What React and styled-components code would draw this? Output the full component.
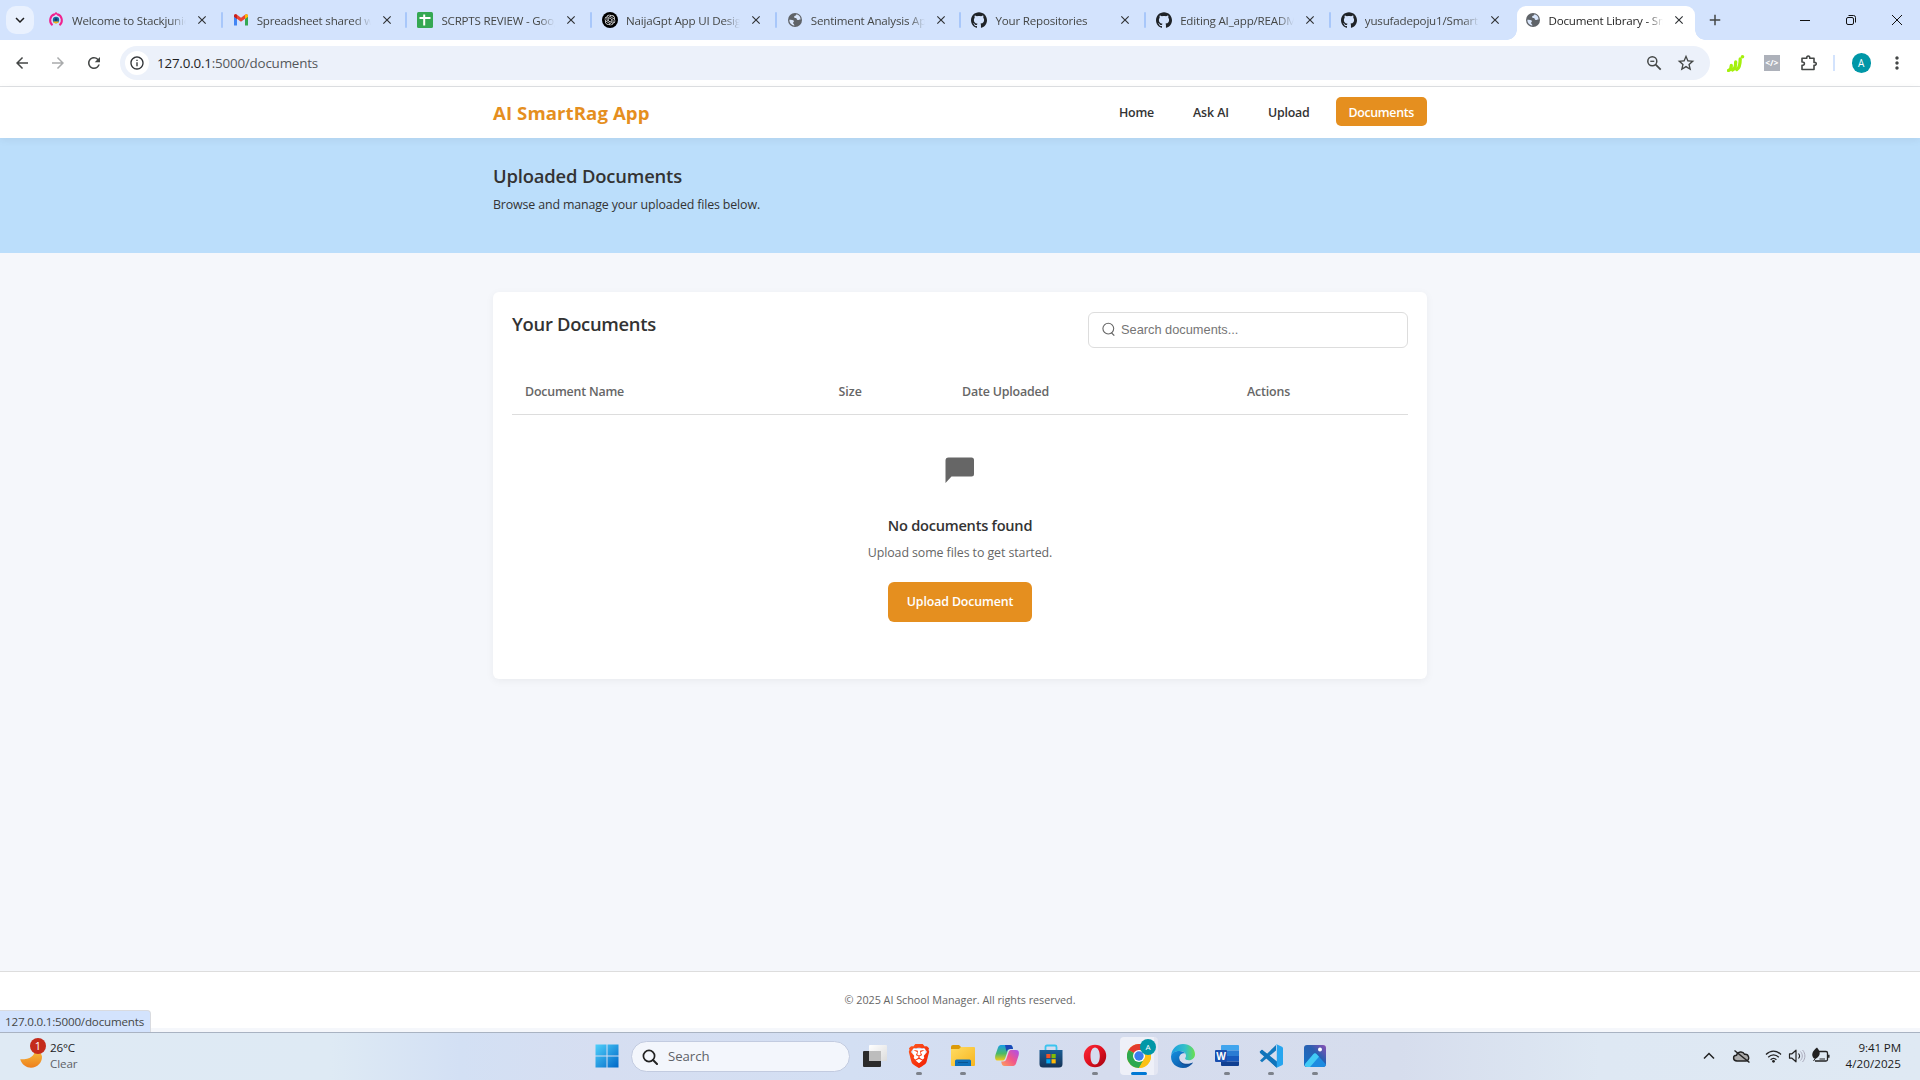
import React from "react";
import styled, { createGlobalStyle, css } from "styled-components";
import { SiGithub, SiOpenai, SiBrave } from "react-icons/si";
import {
  MdArrowBack, MdArrowForward, MdRefresh, MdMoreVert, MdOutlineInfo, MdStarBorder,
  MdKeyboardArrowDown, MdAdd, MdClose,
} from "react-icons/md";

const orange = "#e58f1f";
const tracking = css`letter-spacing: ${(p) => p.$ls || 0}px;`;

const Global = createGlobalStyle`
  * { box-sizing: border-box; }
  body { margin: 0; overflow: hidden; font-family: "Open Sans", "Noto Sans", sans-serif; color: #333; }
  h1, h2, h3, p { margin: 0; }
  svg { display: block; flex: none; }
`;

const Desktop = styled.div`
  width: 1920px; height: 1080px; display: flex; flex-direction: column; overflow: hidden; background: #f5f7fb;
`;

/* ---------- browser chrome ---------- */
const TabStrip = styled.div`
  height: 40px; flex: none; background: #d3e3fd; display: flex; align-items: flex-start; padding: 6px 0 0 6px;
`;
const TabSearch = styled.button`
  width: 28px; height: 28px; border: 0; padding: 0; border-radius: 10px; background: #e9f1fe; color: #1f1f1f;
  display: flex; align-items: center; justify-content: center; margin-right: 3px;
`;
const Tab = styled.div`
  width: 184.7px; height: 34px; display: flex; align-items: center; padding: 0 0 6px 11px; position: relative;
  color: ${(p) => (p.$active ? "#1f1f1f" : "#454746")};
  &::after {
    content: ""; position: absolute; right: -1px; top: 6px; width: 2px; height: 16px; border-radius: 1px;
    background: ${(p) => (p.$line ? "#a8c7fa" : "transparent")};
  }
`;
const ActiveTab = styled(Tab)`
  width: 178px; margin-left: 2px; padding-left: 8px; background: #fff; border-radius: 9px 9px 0 0;
  &::before, &::after {
    content: ""; position: absolute; top: auto; bottom: 0; width: 10px; height: 10px; border-radius: 0;
  }
  &::before { left: -10px; background: radial-gradient(circle at 0 0, transparent 9.5px, #fff 10px); }
  &::after { right: -10px; background: radial-gradient(circle at 100% 0, transparent 9.5px, #fff 10px); }
`;
const TabTitle = styled.span`
  width: 114px; margin-left: 8px; padding-top: 1px; overflow: hidden; white-space: nowrap; font-size: 11.6px; line-height: 18px;
  letter-spacing: -0.2px;
  mask-image: linear-gradient(90deg, #000 86%, transparent 100%);
`;
const TabClose = styled(MdClose)`margin-left: 9px; color: #303336;`;
const NewTab = styled(MdAdd)`margin: 5px 0 0 11px; color: #444746;`;
const WindowButtons = styled.div`
  margin-left: auto; display: flex; width: 138px; height: 28px; align-items: center;
  svg { width: 46px; }
`;

const Toolbar = styled.div`
  height: 47px; flex: none; background: #fff; border-bottom: 1px solid #dfe1e4; display: flex; align-items: center;
  padding: 0 12px 0 13px; color: #444746;
`;
const NavIcons = styled.div`display: flex; align-items: center; gap: 18px; width: 107px; svg:nth-child(2) { color: #a9abac; }`;
const Omnibox = styled.div`
  width: 1590px; height: 34px; border-radius: 17px; background: #ecf1fa; display: flex; align-items: center; padding: 0 14px 0 5px;
`;
const SiteInfo = styled.span`
  width: 24px; height: 24px; border-radius: 50%; background: #fff; display: grid; place-items: center; color: #303336;
`;
const Url = styled.span`
  margin-left: 8px; font-size: 13.4px; line-height: 20px; color: #55585b; ${tracking}
  b { font-weight: 400; color: #1f1f1f; }
`;
const OmniActions = styled.div`margin-left: auto; display: flex; align-items: center; gap: 14px;`;
const Extensions = styled.div`display: flex; align-items: center; margin-left: 17px; width: 180px;`;
const CodeExt = styled.span`
  width: 16px; height: 16px; margin: 0 0 0 19px; background: #adb1ba; color: #fff; font-size: 8.5px; font-weight: 700;
  display: grid; place-items: center; line-height: 16px;
`;
const BarDivider = styled.span`width: 2px; height: 16px; background: #d3e3fd; margin: 0 17px 0 15px;`;
const Avatar = styled.span`
  width: ${(p) => p.$size}px; height: ${(p) => p.$size}px; border-radius: 50%; background: #0097a7; color: #fff;
  display: grid; place-items: center; font-size: ${(p) => p.$size / 2}px; line-height: 1;
`;
const Menu3 = styled(MdMoreVert)`margin-left: 16px;`;

/* ---------- web page ---------- */
const Page = styled.div`flex: 1; display: flex; flex-direction: column; background: #f5f7fb; position: relative;`;
const Container = styled.div`width: 934px; margin: 0 auto;`;
const SiteHeader = styled.header`height: 51px; flex: none; background: #fff; box-shadow: 0 2px 8px rgba(0, 0, 0, 0.06); z-index: 1;`;
const HeaderRow = styled(Container)`display: flex; justify-content: space-between; padding-top: 10px;`;
const Brand = styled.h1`font-size: 18.6px; line-height: 32px; font-weight: 700; color: ${orange}; white-space: nowrap; ${tracking}`;
const Menu = styled.nav`display: flex; gap: 13px;`;
const MenuLink = styled.a`
  height: 29px; padding: 2px 13px 0; border-radius: 5px; font-size: 12.4px; line-height: 28px; font-weight: 600; white-space: nowrap;
  color: ${(p) => (p.$active ? "#fff" : "#333")}; background: ${(p) => (p.$active ? orange : "transparent")}; ${tracking}
`;
const Banner = styled.section`height: 115px; flex: none; background: #bbdefb; padding-top: 26px;`;
const Heading = styled.h2`font-size: 18.4px; line-height: 24px; font-weight: 600; color: #333; white-space: nowrap; ${tracking}`;
const Lead = styled.p`margin-top: 7px; font-size: 12.4px; line-height: 20px; white-space: nowrap; ${tracking}`;
const Card = styled(Container)`
  margin-top: 39px; padding: 20px 19px 57px; background: #fff; border-radius: 6px; box-shadow: 0 2px 8px rgba(0, 0, 0, 0.05);
`;
const CardHead = styled.div`display: flex; justify-content: space-between; align-items: flex-start;`;
const SearchField = styled.label`
  width: 320px; height: 36px; border: 1px solid #ddd; border-radius: 6px; display: flex; align-items: center; padding: 0 0 2px 13px; gap: 6px;
`;
const SearchHint = styled.span`font: 12.8px "Liberation Sans", Arial, sans-serif; color: #757575;`;
const TableHead = styled.div`
  margin-top: 20px; height: 47px; border-bottom: 1px solid #ddd; display: grid; grid-template-columns: 313.5px 123.5px 285px 1fr;
  align-items: center;
`;
const Column = styled.span`padding-left: 13px; font-size: 12.4px; font-weight: 600; color: #666; white-space: nowrap; ${tracking}`;
const Empty = styled.div`display: flex; flex-direction: column; align-items: center; padding-top: 42px;`;
const EmptyTitle = styled.h3`margin-top: 31px; font-size: 14.6px; line-height: 20px; font-weight: 600; white-space: nowrap; ${tracking}`;
const EmptyText = styled.p`margin-top: 8px; font-size: 12.4px; line-height: 20px; color: #666; white-space: nowrap; ${tracking}`;
const UploadButton = styled.button`
  margin-top: 19px; width: 144px; height: 40px; border: 0; border-radius: 6px; background: ${orange}; color: #fff; padding: 0 0 2px;
  font-family: inherit; font-size: 12.4px; font-weight: 600; white-space: nowrap; ${tracking}
`;
const SiteFooter = styled.footer`
  margin: auto 0 4px; height: 57px; border-top: 1px solid #ddd; background: #fff; display: flex; align-items: center; justify-content: center;
  padding-bottom: 2px; font-size: 10.8px; color: #666; ${tracking}
`;
const LinkBubble = styled.div`
  position: absolute; left: 0; bottom: 0; width: 151px; height: 22px; padding-left: 5px; background: #d3e3fd; color: #454746;
  border: 1px solid #d9dbe0; border-width: 1px 1px 0 0; border-radius: 0 4px 0 0; font-size: 11.6px; line-height: 22px; white-space: nowrap; ${tracking}
`;

/* ---------- taskbar ---------- */
const Taskbar = styled.div`
  height: 48px; flex: none; border-top: 1px solid #a9b3c2; display: flex; justify-content: space-between;
  background: linear-gradient(90deg, #dfeaf4 0, #deeaf4 330px, #d3e0f4 460px, #d6def1 600px, #d3dff3 850px, #d5dcee 1100px, #d6dded 1400px, #dee8f3 1600px, #dfe9f3 100%);
`;
const Weather = styled.div`width: 585px; display: flex; padding: 7px 0 0 20px; gap: 6px; font-size: 11.6px; line-height: 16px;`;
const WeatherArt = styled.div`width: 24px; height: 34px; padding-top: 10px; position: relative;`;
const Badge = styled.span`
  position: absolute; left: 10px; top: -2px; width: 16px; height: 16px; border-radius: 50%; background: #c42b1c; color: #fff;
  font-size: 11px; line-height: 16px; text-align: center;
`;
const Temp = styled.div`color: #1b1b1b; ${tracking}`;
const Sky = styled.div`color: #5d6166; ${tracking}`;
const Dock = styled.div`display: flex; align-items: flex-start; flex: 1;`;
const DockItem = styled.div`
  width: 44px; height: 46px; padding-top: 11px; display: flex; justify-content: center; position: relative;
  &::after {
    content: ""; position: absolute; bottom: 4px; border-radius: 2px; height: 3px;
    width: ${(p) => (p.$active ? 16 : 6)}px; background: ${(p) => (p.$active ? "#0078d4" : p.$open ? "#7d828b" : "transparent")};
  }
`;
const ActivePlate = styled.span`
  position: absolute; left: 3px; top: 4px; width: 38px; height: 38px; border-radius: 4px; background: #eef0f8; border-right: 4px solid #e3e6f2;
  & + svg { position: relative; }
`;
const ChromeProfile = styled(Avatar)`position: absolute; left: 23px; top: 6px;`;
const SearchPill = styled.div`
  width: 219px; height: 31px; margin: 8px 3px 0 2px; border-radius: 16px; background: #f3f6fc; border: 1px solid #c2cbe0;
  display: flex; align-items: center; padding-left: 10px; gap: 10px; font-size: 13.2px; color: #5f6368;
`;
const SearchWord = styled.span`padding-bottom: 2px; ${tracking}`;
const Tray = styled.div`display: flex; align-items: center; height: 46px; padding-right: 19px; width: 220px; color: #1b1b1b;`;
const Clock = styled.div`margin-left: auto; text-align: right; font-size: 11.6px; line-height: 16px; white-space: nowrap; color: #1b1b1b;`;
const ClockLine = styled.div`${tracking}`;

/* ---------- drawings ---------- */
const Svg = ({ w = 16, h = w, box, children, ...r }) => (
  <svg width={w} height={h} viewBox={box || `0 0 ${w} ${h}`} fill="none" {...r}>{children}</svg>
);
const StackIcon = () => (
  <Svg><path d="M4.5 13.2A6.3 6.3 0 0 1 6.500 2.300M9.500 2.300a6.300 6.300 0 0 1 2 10.900" stroke="#f0228e" strokeWidth="2" /><path d="M6 3l2-2 2 2" stroke="#f0228e" strokeWidth="1.500" /><circle cx="8" cy="8" r="3.200" fill="#156b9e" /><path d="M5 9.500a3.200 3.200 0 0 0 6 0z" fill="#f7b718" /><circle cx="8" cy="7.600" r="1.300" fill="#143a66" /></Svg>
);
const GmailIcon = () => (
  <Svg><path d="M1 13.500V4l3 2.200v7.300z" fill="#4285f4" /><path d="M12 13.500V6.200L15 4v9.500z" fill="#34a853" /><path d="M1 4.500V4c0-1.700 1.700-2.200 3-1.200l4 3 4-3c1.300-1 3-.5 3 1.200v.5L8 9.800z" fill="#ea4335" /><path d="M12 2.800c1.300-1 3-.5 3 1.200v.8l-3 2.200z" fill="#fbbc04" /><path d="M1 4.800V4c0-1.700 1.700-2.200 3-1.200V7z" fill="#c5221f" /></Svg>
);
const SheetsIcon = () => (
  <Svg><rect width="16" height="16" rx="1.500" fill="#34a853" /><path d="M2.500 6h11M7.200 2.500v11" stroke="#fff" strokeWidth="2" /></Svg>
);
const GptIcon = () => (
  <Svg><circle cx="8" cy="8" r="8" fill="#000" /><SiOpenai x="2.500" y="2.500" width="11" height="11" size={11} color="#fff" /></Svg>
);
const GlobeIcon = () => (
  <Svg><circle cx="8" cy="8" r="7" fill="#5f6368" /><path d="M9.500 2.200c-.4 1.600-2.200 1.300-2.400 2.500-.1 1 .6 1.200 1.700 1.300 1.200.2.7 1.800 2 2 1.100.1 1.400-.7 2.800-.6a5.700 5.700 0 0 0-4.100-5.200zM2.300 7.800c1.600.1 4.300-.1 4.600 1.200.2 1-.8 1.100-.9 2-.1.800 1.300.5 1.400 2.700a5.800 5.800 0 0 1-5.100-5.900z" fill="#d9e6fb" /></Svg>
);
const ZoomOutIcon = () => (
  <Svg w={16}><circle cx="6.300" cy="6.300" r="4.500" stroke="#444746" strokeWidth="1.500" /><path d="M9.700 9.700l5 5" stroke="#444746" strokeWidth="1.800" /><path d="M4.300 6.300h4" stroke="#444746" strokeWidth="1.300" /></Svg>
);
const BarsExt = () => (
  <Svg w={18}><path d="M1.500 16.500c1.800-.6 2.800-2.500 2.800-5M5.500 16c2-.8 3.200-3.800 3.200-8M9.800 15.500c2-1 3.400-5 3.400-10.500" stroke="#a4f00c" strokeWidth="3.300" strokeLinecap="round" /><circle cx="15.500" cy="2.800" r="1.800" fill="#a4f00c" /></Svg>
);
const PuzzleSvg = styled(Svg)`margin-left: 20px;`;
const PuzzleIcon = () => (
  <PuzzleSvg w={18}><path d="M2 4.200h4.800c-.5-3 3.400-3 2.900 0h4.300v4.200c3-.5 3 3.400 0 2.900v4.200H2v-4.100c3.200.1 3.200-3.600 0-3.400z" stroke="#444746" strokeWidth="1.600" strokeLinejoin="round" /></PuzzleSvg>
);
const SearchGlyph = () => (
  <Svg w={13} h={15}><circle cx="6.300" cy="6.600" r="5.400" stroke="#666" strokeWidth="1.100" /><path d="M9.300 10.600l3 3" stroke="#666" strokeWidth="1.300" /></Svg>
);
const ChatGlyph = () => (
  <Svg w={30} h={27}><path d="M3.500.500H26.500Q29 .500 29 3V17Q29 19.500 26.500 19.500H6.500L.5 26V3.500Q.5.500 3.500.500z" fill="#666" /></Svg>
);
const MoonIcon = () => (
  <Svg w={23} h={20}><defs><linearGradient id="moon" x1="0" y1="0" x2="0" y2="1"><stop stopColor="#f6bd3c" /><stop offset="1" stopColor="#ee7f1c" /></linearGradient></defs><path d="M14.500 0c.5 6-4.500 9.500-14.300 9.300C2 15 6.500 17.700 11 17.700c6.500 0 11.200-5.200 11-11.200C21.800 3.500 18 .5 14.500 0z" fill="url(#moon)" /></Svg>
);
const WindowsIcon = () => (
  <Svg w={24}><defs><linearGradient id="win" x1="0" y1="0" x2="1" y2="1"><stop stopColor="#4fd0fb" /><stop offset="1" stopColor="#0067c7" /></linearGradient></defs><path d="M.5.5h11v11H.5zM12.500.5h11v11h-11zM.5 12.500h11v11H.5zM12.500 12.500h11v11h-11z" fill="url(#win)" /></Svg>
);
const TaskbarSearchIcon = () => (
  <Svg w={16}><circle cx="7" cy="7" r="5.600" stroke="#222" strokeWidth="1.700" /><path d="M11 11l4 4" stroke="#222" strokeWidth="2" strokeLinecap="round" /></Svg>
);
const TaskViewIcon = () => (
  <Svg w={24}><defs><linearGradient id="tv" x1="0" y1="0" x2="1" y2="1"><stop stopColor="#fff" /><stop offset="1" stopColor="#dcdcdc" /></linearGradient></defs><rect y="7" width="18" height="16" rx="1" fill="#2b2b2b" /><rect x="6" y="1" width="18" height="16" rx="1" fill="url(#tv)" /><path d="M6 7h12v10H6z" fill="#bdbdbd" /></Svg>
);
const BraveIcon = () => (
  <Svg w={24}><defs><linearGradient id="brave" x1="0" y1="0" x2="1" y2="1"><stop stopColor="#ff5a1f" /><stop offset="1" stopColor="#f11a00" /></linearGradient></defs><path d="M6 5h12l1 8-7 8-7-8z" fill="#fff" /><SiBrave size={24} fill="url(#brave)" /></Svg>
);
const FolderIcon = () => (
  <Svg w={24}><defs><linearGradient id="fold" x1="0" y1="0" x2="1" y2="1"><stop stopColor="#ffdc62" /><stop offset="1" stopColor="#f7b51f" /></linearGradient></defs><path d="M0 3q0-2 2-2h6l2 2v4H0z" fill="#dc9a08" /><path d="M0 5h8l2-2h13q1 0 1 1v17q0 1-1 1H1q-1 0-1-1z" fill="url(#fold)" /><path d="M4 22v-5q0-1.500 1.500-1.500h13q1.500 0 1.500 1.500v5z" fill="#0e70ba" /><path d="M7 18.500h10" stroke="#095591" /></Svg>
);
const CopilotIcon = () => (
  <Svg w={24}><defs><linearGradient id="cp1" x1="0" y1="0" x2="0" y2="1"><stop stopColor="#169ee9" /><stop offset=".55" stopColor="#4bb967" /><stop offset="1" stopColor="#f4cb16" /></linearGradient><linearGradient id="cp2" x1="1" y1="0" x2="0" y2="1"><stop stopColor="#a94ff0" /><stop offset=".5" stopColor="#f1568a" /><stop offset="1" stopColor="#ffa05a" /></linearGradient></defs><path d="M7 1h8c2 0 2.500 1.500 3 4h-2.500c-2 0-2.600 1-3.200 3l-2 6c-.7 2-1.500 2.500-3.300 2.500H3C0 16.500-.3 14 .4 11L3 3.500C3.700 1.500 5 1 7 1z" fill="url(#cp1)" /><path d="M10 1h5c2 0 2.500 1.500 3 4h-3c-2 0-3 1-3.500 3z" fill="#1c48b8" /><path d="M17 22H9.500c-2 0-2.800-1.500-3.300-4.500h2c2 0 2.700-1 3.300-3l2-6c.6-2 1.500-2.500 3.300-2.500H21c3 0 3.300 2.500 2.600 5.500L21 19.500c-.7 2-2 2.500-4 2.500z" fill="url(#cp2)" /></Svg>
);
const StoreIcon = () => (
  <Svg w={24}><defs><linearGradient id="store" x1="0" y1="0" x2="0" y2="1"><stop stopColor="#1a5c94" /><stop offset="1" stopColor="#163457" /></linearGradient></defs><path d="M6.500 6V3q0-1.500 1.500-1.500h8q1.500 0 1.500 1.500v3" stroke="#3bc4ef" strokeWidth="1.800" /><path d="M.5 6h23v14q0 3.500-3.500 3.500H4Q.5 23.500.5 20z" fill="url(#store)" /><path d="M7.300 10h4.200v4.200H7.300z" fill="#f35325" /><path d="M12.500 10h4.200v4.200h-4.200z" fill="#81bc06" /><path d="M7.300 15.200h4.200v4.200H7.300z" fill="#05a6f0" /><path d="M12.500 15.200h4.200v4.200h-4.200z" fill="#ffba08" /></Svg>
);
const OperaIcon = () => (
  <Svg w={24}><defs><linearGradient id="op" x1="0" y1="0" x2="1" y2="1"><stop stopColor="#ff2b3a" /><stop offset=".5" stopColor="#e0101f" /><stop offset="1" stopColor="#a00410" /></linearGradient></defs><path fillRule="evenodd" d="M12 .8a11.200 11.200 0 1 1 0 22.400A11.200 11.200 0 0 1 12 .8zm0 2.700C9.200 3.500 7.500 7 7.500 12s1.700 8.500 4.500 8.500 4.800-3.500 4.800-8.500S14.800 3.500 12 3.500z" fill="url(#op)" /></Svg>
);
const ChromeIcon = () => (
  <Svg w={24}><circle cx="12" cy="12" r="12" fill="#fbc116" /><path d="M12 12L1.600 6A12 12 0 0 1 22.400 6z" fill="#e33b2e" /><path d="M12 12L1.600 6A12 12 0 0 0 12 24l5-9z" fill="#2da94f" /><path d="M12 6h10.400A12 12 0 0 1 12 24l5.200-9z" fill="#fbc116" /><circle cx="12" cy="12" r="6" fill="#fff" /><circle cx="12" cy="12" r="4.700" fill="#3b7ded" /></Svg>
);
const EdgeIcon = () => (
  <Svg w={24}><defs><linearGradient id="ed1" x1="0" y1=".3" x2="1" y2=".3"><stop stopColor="#1b9de2" /><stop offset=".6" stopColor="#35c1c8" /><stop offset="1" stopColor="#6be04a" /></linearGradient><linearGradient id="ed2" x1="0" y1="0" x2="1" y2="1"><stop stopColor="#1490df" /><stop offset="1" stopColor="#0b4a9a" /></linearGradient></defs><path d="M.2 11C1 4.500 6 0 12 0c7 0 12 4.800 12 10.200 0 3.600-2.800 6-6 6-2.700 0-3.900-.9-3.900-1.700 0-.6.900-1 .9-2.700C15 9 12.200 7 8.500 7 4.500 7 1.500 8.700.2 11z" fill="url(#ed1)" /><path d="M.1 12C.8 8.800 4.300 7 8.500 7c2.500 0 4.600 1 5.700 2.400-3.700-.8-6 1.700-6 4.600 0 4.300 3.800 7 8.300 6.500 2-.2 4-1 5.500-2-2 3.500-5.700 5.500-10 5.500C4.500 24-.5 18.500.1 12z" fill="url(#ed2)" /><path d="M8.200 14c-.6 5 4.500 8 8.500 7.600 2.300-.3 4-1.400 5.300-3.100-7 3-13.500.5-13.800-4.500z" fill="#124f98" /></Svg>
);
const WordIcon = () => (
  <Svg w={24}><path d="M6 2q0-1 1-1h16q1 0 1 1v4.500H6z" fill="#41a5ee" /><path d="M6 6.500h18V12H6z" fill="#2b7cd3" /><path d="M6 12h18v5.500H6z" fill="#185abd" /><path d="M6 17.500h18V21q0 1-1 1H7q-1 0-1-1z" fill="#103f91" /><rect y="6" width="12" height="12" rx="1" fill="#1a4fae" /><text x="6" y="15.500" fill="#fff" fontSize="10" fontWeight="700" textAnchor="middle" fontFamily="Open Sans">W</text></Svg>
);
const CodeIcon = () => (
  <Svg w={24}><path d="M1 16.500L17 1v5.500L3 18.200z" fill="#1277bd" /><path d="M1 7.500L17 23v-5.500L3 5.800z" fill="#0a68ad" /><path d="M1 7.500L3 5.800 18 17.500V24L.8 8.800z" fill="#0f74bb" /><path d="M17 0l6 2.700q1 .5 1 1.500v15.600q0 1-1 1.500L17 24q.8-.5.8-1.700V1.700Q17.800.5 17 0z" fill="#27a5ef" /></Svg>
);
const PhotosIcon = () => (
  <Svg w={22} h={23}><defs><linearGradient id="ph" x1="0" y1="1" x2="1" y2="0"><stop stopColor="#1373c9" /><stop offset=".6" stopColor="#2b5fb0" /><stop offset="1" stopColor="#8e50b4" /></linearGradient></defs><rect y="1" width="22" height="22" rx="3" fill="url(#ph)" /><path d="M1 20L9.500 10q1.500-1.500 3 0L22 20.500q-.7 2.500-3 2.500H3q-1.500 0-2-1z" fill="#1d8be0" /><path d="M1 20L9.500 10q1.500-1.500 3 0l2.500 2.800L6 23H3q-1.500 0-2-1z" fill="#43cbf5" /><circle cx="16" cy="5.500" r="2" fill="#fff" /></Svg>
);
const TrayIcons = () => (
  <Svg w={130} h={24}>
    <path d="M4 14.500l5-5 5 5" stroke="#222" strokeWidth="1.500" />
    <path d="M37 17c-4.500-.3-4.500-5.500-.500-5.700 1-4 6.500-4.500 8-1 4.500-.5 6 6 1.500 6.700z" fill="#aaa" stroke="#222" strokeWidth="1.400" /><path d="M34.500 6.500l15 12" stroke="#222" strokeWidth="1.500" />
    <path d="M66 10.500c4.500-4.500 10.500-4.500 15 0M68.200 13.200c3.200-3.200 7.400-3.200 10.600 0M70.600 15.700c1.800-1.700 4-1.700 5.800 0" stroke="#222" strokeWidth="1.300" /><circle cx="73.500" cy="17.300" r="1.400" fill="#222" />
    <path d="M89.500 9.800h2.500l4-3.600v11.600l-4-3.600h-2.500z" stroke="#222" strokeWidth="1.200" strokeLinejoin="round" /><path d="M98.500 9.500c1.300 1.600 1.300 3.600 0 5" stroke="#222" strokeWidth="1.100" /><path d="M100.500 7.500c2.400 2.800 2.400 6.300 0 9M102.500 6c3.200 3.500 3.200 8.500 0 12" stroke="#aab" />
    <path d="M119 7.500h7q1.500 0 1.500 1.500v6.500q0 1.500-1.500 1.500h-11" stroke="#222" strokeWidth="1.300" /><path d="M128.800 10.800v3" stroke="#222" strokeWidth="1.500" /><path d="M117 3.500c4 4.500 3.500 8.500-1 11h-2c-3.500-3.500-1.500-7.500 3-11z" fill="#222" /><path d="M113.500 17l3.500-5" stroke="#222" /><path d="M119.500 15h5.500" stroke="#222" />
  </Svg>
);

const github = <SiGithub size={16} color="#1f2328" />;
const tabs = [
  { icon: <StackIcon />, title: "Welcome to Stackjunior" },
  { icon: <GmailIcon />, title: "Spreadsheet shared with" },
  { icon: <SheetsIcon />, title: "SCRPTS REVIEW - Google" },
  { icon: <GptIcon />, title: "NaijaGpt App UI Design" },
  { icon: <GlobeIcon />, title: "Sentiment Analysis App" },
  { icon: github, title: "Your Repositories" },
  { icon: github, title: "Editing AI_app/README" },
  { icon: github, title: "yusufadepoju1/SmartRag" },
];
const columns = [["Document Name", -0.191], ["Size", 0.039], ["Date Uploaded", -0.171], ["Actions", -0.167]];
const links = [["Home", -0.211], ["Ask AI", -0.086], ["Upload", -0.224], ["Documents", -0.326]];

export default function App() {
  return (
    <Desktop>
      <Global />
      <TabStrip>
        <TabSearch><MdKeyboardArrowDown size={18} /></TabSearch>
        {tabs.map((t, i) => (
          <Tab key={t.title} $line={i < 7}>{t.icon}<TabTitle>{t.title}</TabTitle><TabClose size={14} /></Tab>
        ))}
        <ActiveTab $active><GlobeIcon /><TabTitle>Document Library - Smart</TabTitle><TabClose size={14} /></ActiveTab>
        <NewTab size={18} />
        <WindowButtons>
          <Svg w={46} h={28}><path d="M18 14.500h10" stroke="#111" /></Svg>
          <Svg w={46} h={28}><rect x="18.500" y="11.500" width="7" height="7" rx="1.500" stroke="#111" /><path d="M20.500 9.500h5q2 0 2 2v5" stroke="#111" /></Svg>
          <Svg w={46} h={28}><path d="M18 9l10 10M28 9L18 19" stroke="#111" /></Svg>
        </WindowButtons>
      </TabStrip>
      <Toolbar>
        <NavIcons><MdArrowBack size={18} /><MdArrowForward size={18} /><MdRefresh size={18} /></NavIcons>
        <Omnibox>
          <SiteInfo><MdOutlineInfo size={16} /></SiteInfo>
          <Url $ls={-0.2}><b>127.0.0.1</b>:5000/documents</Url>
          <OmniActions><ZoomOutIcon /><MdStarBorder size={20} /></OmniActions>
        </Omnibox>
        <Extensions>
          <BarsExt /><CodeExt>&lt;/&gt;</CodeExt><PuzzleIcon /><BarDivider /><Avatar $size={20}>A</Avatar>
          <Menu3 size={20} />
        </Extensions>
      </Toolbar>

      <Page>
        <SiteHeader>
          <HeaderRow>
            <Brand $ls={0.082}>AI SmartRag App</Brand>
            <Menu>
              {links.map(([l, ls]) => <MenuLink key={l} $active={l === "Documents"} $ls={ls}>{l}</MenuLink>)}
            </Menu>
          </HeaderRow>
        </SiteHeader>
        <Banner>
          <Container>
            <Heading $ls={-0.166}>Uploaded Documents</Heading>
            <Lead $ls={-0.142}>Browse and manage your uploaded files below.</Lead>
          </Container>
        </Banner>
        <Card>
          <CardHead>
            <Heading $ls={-0.3}>Your Documents</Heading>
            <SearchField><SearchGlyph /><SearchHint>Search documents...</SearchHint></SearchField>
          </CardHead>
          <TableHead>{columns.map(([c, ls]) => <Column key={c} $ls={ls}>{c}</Column>)}</TableHead>
          <Empty>
            <ChatGlyph />
            <EmptyTitle $ls={-0.235}>No documents found</EmptyTitle>
            <EmptyText $ls={-0.084}>Upload some files to get started.</EmptyText>
            <UploadButton $ls={-0.131}>Upload Document</UploadButton>
          </Empty>
        </Card>
        <SiteFooter $ls={-0.021}>© 2025 AI School Manager. All rights reserved.</SiteFooter>
        <LinkBubble $ls={-0.186}>127.0.0.1:5000/documents</LinkBubble>
      </Page>

      <Taskbar>
        <Weather>
          <WeatherArt><MoonIcon /><Badge>1</Badge></WeatherArt>
          <div><Temp $ls={-0.133}>26°C</Temp><Sky $ls={-0.084}>Clear</Sky></div>
        </Weather>
        <Dock>
          <DockItem><WindowsIcon /></DockItem>
          <SearchPill><TaskbarSearchIcon /><SearchWord $ls={-0.05}>Search</SearchWord></SearchPill>
          <DockItem><TaskViewIcon /></DockItem>
          <DockItem $open><BraveIcon /></DockItem>
          <DockItem $open><FolderIcon /></DockItem>
          <DockItem><CopilotIcon /></DockItem>
          <DockItem><StoreIcon /></DockItem>
          <DockItem $open><OperaIcon /></DockItem>
          <DockItem $active><ActivePlate /><ChromeIcon /><ChromeProfile $size={16}>A</ChromeProfile></DockItem>
          <DockItem><EdgeIcon /></DockItem>
          <DockItem $open><WordIcon /></DockItem>
          <DockItem $open><CodeIcon /></DockItem>
          <DockItem $open><PhotosIcon /></DockItem>
        </Dock>
        <Tray>
          <TrayIcons />
          <Clock><ClockLine $ls={-0.123}>9:41 PM</ClockLine><ClockLine $ls={0.066}>4/20/2025</ClockLine></Clock>
        </Tray>
      </Taskbar>
    </Desktop>
  );
}
